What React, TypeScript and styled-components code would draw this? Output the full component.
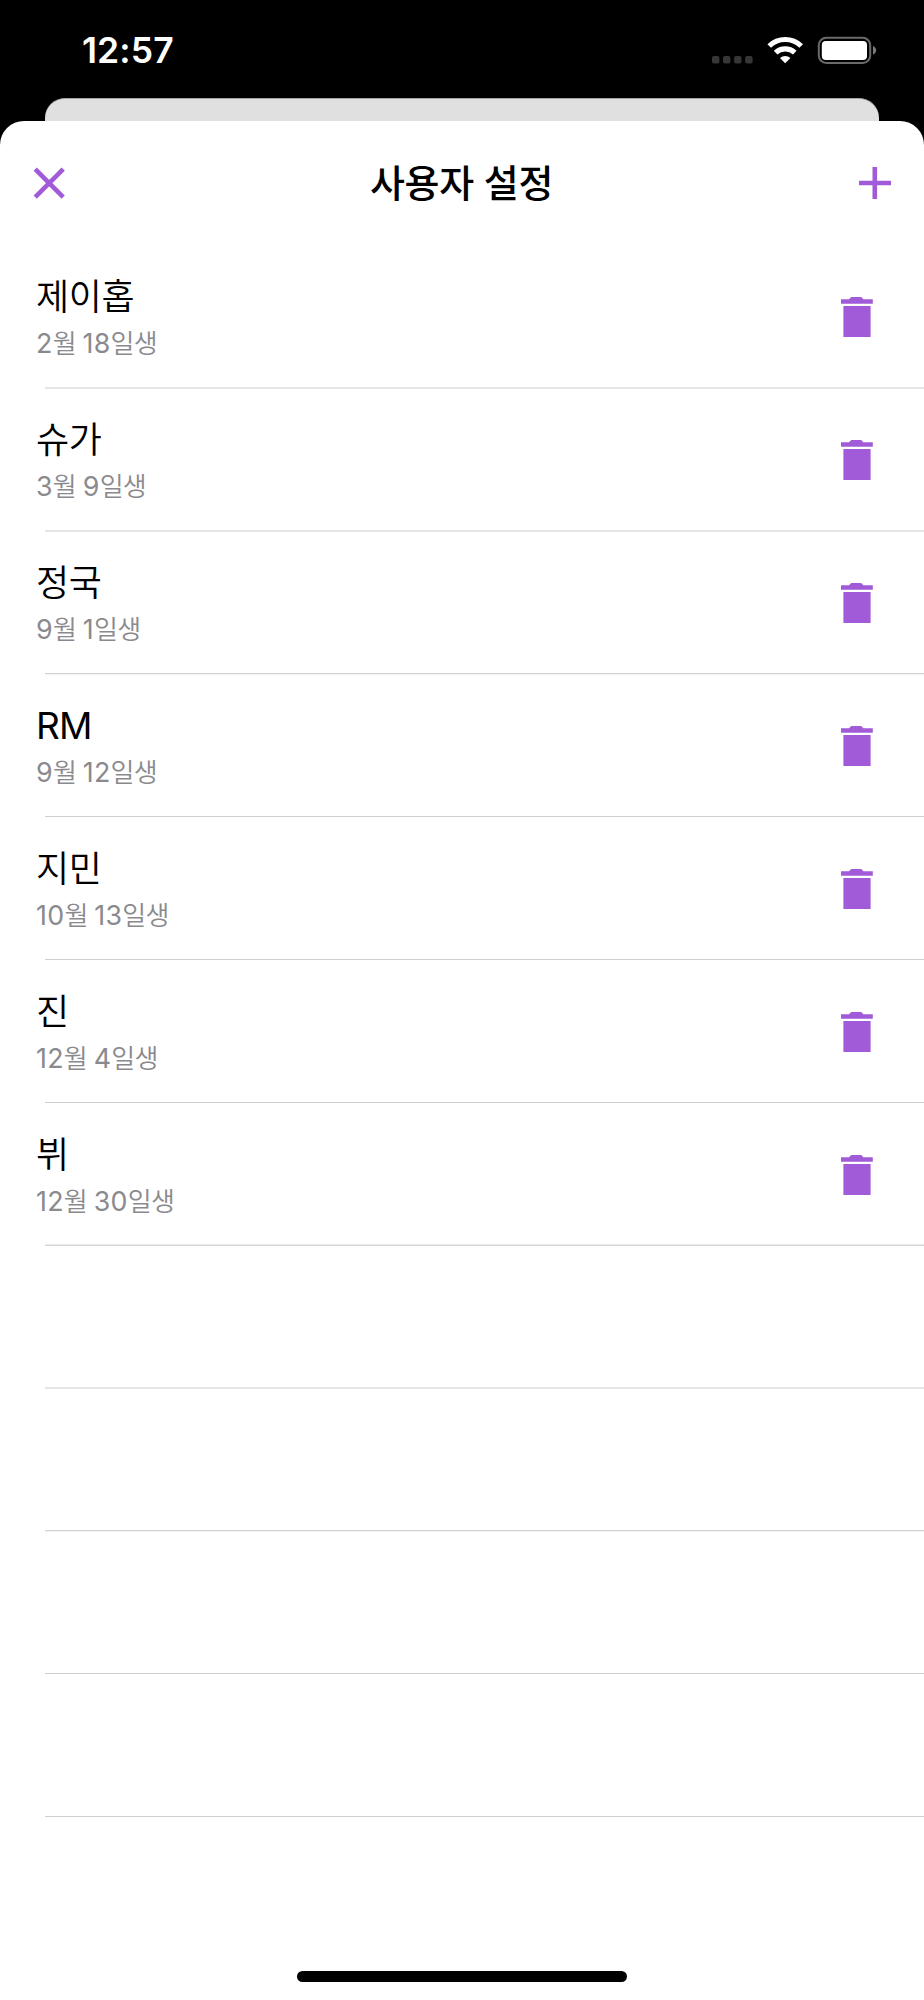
import React from "react";
import styled, { createGlobalStyle } from "styled-components";

const ACCENT = "#a25bd8";

const GlobalStyle = createGlobalStyle`
  html, body { margin: 0; background: #000; }
  *, *::after { box-sizing: border-box; }
`;

const Screen = styled.div`
  width: 924px;
  height: 2000px;
  overflow: hidden;
  background: #000;
  display: flex;
  flex-direction: column;
  font-family: Inter, "Noto Sans CJK KR", sans-serif;
`;

const StatusBar = styled.div`
  height: 98px;
  flex: none;
  display: flex;
  justify-content: space-between;
  padding: 0 47px 0 82px;
  color: #fff;
`;

const Clock = styled.div`
  font-size: 35.5px;
  font-weight: 600;
  line-height: 44px;
  margin-top: 29px;
  letter-spacing: 0.1px;
`;

const StatusIcons = styled.svg`
  display: block;
  width: 168px;
  height: 32px;
  margin-top: 34px;
`;

const BackSheet = styled.div`
  height: 23px;
  flex: none;
  margin: 0 45px;
  background: #e0e0e0;
  border-radius: 20px 20px 0 0;
  border-top: 1px solid #a4a3a4;
`;

const Sheet = styled.main`
  flex: 1;
  background: #fff;
  border-radius: 24px 24px 0 0;
  display: flex;
  flex-direction: column;
`;

const Header = styled.header`
  height: 124px;
  flex: none;
  display: flex;
  align-items: center;
  justify-content: space-between;
  padding: 0 33px;
`;

const Title = styled.h1`
  margin: 0 1px 0 0;
  font-size: 38px;
  font-weight: 500;
  line-height: 50px;
  letter-spacing: -0.3px;
  color: #000;
`;

const IconButton = styled.button`
  border: 0;
  padding: 0;
  background: none;
  display: flex;
  color: ${ACCENT};
`;

const List = styled.ul`
  list-style: none;
  margin: 0;
  padding: 1px 0 0;
  flex: 1;
`;

type Line = "soft" | "top" | "thin" | "bottom";

const lineColors: Record<Line, [string, string]> = {
  soft: ["#e6e6e7", "#e6e6e7"],
  top: ["#d2d2d4", "#f2f2f3"],
  thin: ["#cfcfd1", "#ffffff"],
  bottom: ["#ebebec", "#d6d6d8"],
};

const Row = styled.li<{ $line: Line; $short?: boolean }>`
  height: ${(p) => (p.$short ? 142 : 143)}px;
  display: flex;
  flex-direction: column;
  &::after {
    content: "";
    flex: none;
    height: 2px;
    margin-left: 45px;
    background: ${(p) => lineColors[p.$line][1]};
    border-top: 1px solid ${(p) => lineColors[p.$line][0]};
  }
`;

const RowBody = styled.div`
  flex: 1;
  display: flex;
  justify-content: space-between;
  padding: 0 50px 0 36px;
`;

const Latin = styled.span`
  font-weight: 400;
`;

const Name = styled.div`
  margin-top: 26px;
  height: 50px;
  font-size: 36px;
  font-weight: 350;
  line-height: 50px;
  letter-spacing: -0.4px;
  color: #000;
  ${Latin} {
    font-size: 37px;
    letter-spacing: -0.7px;
  }
`;

const Birthday = styled.div`
  height: 40px;
  margin-top: 1px;
  font-size: 26px;
  font-weight: 350;
  line-height: 40px;
  letter-spacing: -0.7px;
  color: #8a8a8e;
  white-space: pre;
  ${Latin} {
    font-size: 26.8px;
    letter-spacing: 0.3px;
  }
`;

const DeleteButton = styled(IconButton)`
  align-self: flex-start;
  margin-top: 51px;
`;

const HomeIndicator = styled.div`
  width: 330px;
  height: 11px;
  border-radius: 6px;
  background: #000;
  margin: 0 auto 18px;
`;

const people: { name: string; birthday: string; line: Line; short?: boolean }[] = [
  { name: "제이홉", birthday: "2월 18일생", line: "soft" },
  { name: "슈가", birthday: "3월 9일생", line: "soft" },
  { name: "정국", birthday: "9월 1일생", line: "top" },
  { name: "RM", birthday: "9월 12일생", line: "thin" },
  { name: "지민", birthday: "10월 13일생", line: "thin" },
  { name: "진", birthday: "12월 4일생", line: "thin" },
  { name: "뷔", birthday: "12월 30일생", line: "bottom", short: true },
];
const emptyRows: Line[] = ["soft", "top", "thin", "thin"];

/* Latin letters and digits are set slightly larger than the Hangul beside them. */
const MixedText = ({ text }: { text: string }) => (
  <>
    {text.split(/([A-Za-z0-9]+)/).map((part, i) =>
      i % 2 ? <Latin key={i}>{part}</Latin> : part
    )}
  </>
);

const TrashIcon = () => (
  <svg width="34" height="42" viewBox="0 0 34 42" fill="currentColor">
    <path d="M1 2.2H9L11.2 0H21.2L23.4 2.2H32.8V6.8H1Z" />
    <rect x="3.4" y="9" width="27.2" height="31" />
  </svg>
);

export default function App() {
  return (
    <Screen>
      <GlobalStyle />
      <StatusBar>
        <Clock>12:57</Clock>
        <StatusIcons viewBox="0 0 168 32">
          <g fill="#363636">
            <rect x="3" y="22" width="7.4" height="7.4" rx="1.9" />
            <rect x="14" y="22" width="7.4" height="7.4" rx="1.9" />
            <rect x="25.1" y="22" width="7.4" height="7.4" rx="1.9" />
            <rect x="36.2" y="22" width="7.4" height="7.4" rx="1.9" />
          </g>
          <g fill="none" stroke="#fff" strokeWidth="5.2">
            <path d="M60.2 12A23 23 0 0 1 92.2 12" />
            <path d="M66.6 18.6A14.2 14.2 0 0 1 85.8 18.6" />
          </g>
          <path d="M71 24A8 8 0 0 1 81.4 24L76.2 29.3Z" fill="#fff" />
          <rect x="109.8" y="3.8" width="51.4" height="25.2" rx="7.5" fill="none" stroke="#6a6a6a" strokeWidth="2" />
          <rect x="112.8" y="7" width="45.2" height="19" rx="4" fill="#fff" />
          <path d="M164 12C168.2 14 168.2 18.6 164 20.6Z" fill="#7a7a7a" />
        </StatusIcons>
      </StatusBar>
      <BackSheet />
      <Sheet>
        <Header>
          <IconButton aria-label="닫기">
            <svg width="32" height="32" viewBox="0 0 32 32" stroke="currentColor" strokeWidth="4.6">
              <path d="M2.2 2.2L30.2 30.2M30.2 2.2L2.2 30.2" />
            </svg>
          </IconButton>
          <Title>사용자 설정</Title>
          <IconButton aria-label="추가">
            <svg width="32" height="32" viewBox="0 0 32 32" stroke="currentColor" strokeWidth="4.6">
              <path d="M15.8 0V32M0 16H32" />
            </svg>
          </IconButton>
        </Header>
        <List>
          {people.map((p) => (
            <Row key={p.name} $line={p.line} $short={p.short}>
              <RowBody>
                <div>
                  <Name><MixedText text={p.name} /></Name>
                  <Birthday><MixedText text={p.birthday} /></Birthday>
                </div>
                <DeleteButton aria-label="삭제">
                  <TrashIcon />
                </DeleteButton>
              </RowBody>
            </Row>
          ))}
          {emptyRows.map((line, i) => (
            <Row key={i} $line={line}>
              <RowBody />
            </Row>
          ))}
        </List>
        <HomeIndicator />
      </Sheet>
    </Screen>
  );
}
